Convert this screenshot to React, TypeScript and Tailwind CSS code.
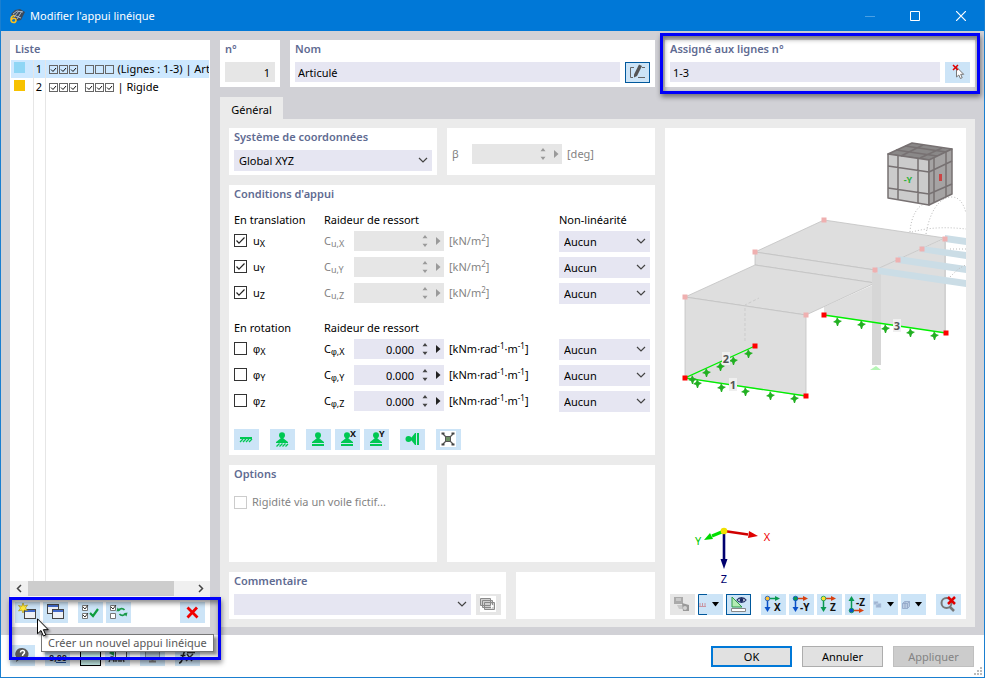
import type { ReactNode } from "react";
import { clsx } from "clsx";

type Cls = { className?: string };

function Card({ title, className, children }: { title?: string; className?: string; children?: ReactNode }) {
  return (
    <section className={clsx("bg-white px-[5px]", className)}>
      {title && <h2 className="h-[22px] pt-px text-[11px] leading-4 font-semibold text-[#5f6b92]">{title}</h2>}
      {children}
    </section>
  );
}

function IconButton({ label, className, disabled, children }: { label: string; className?: string; disabled?: boolean; children: ReactNode }) {
  return (
    <button
      type="button"
      aria-label={label}
      disabled={disabled}
      className={clsx("flex h-[21px] w-[25px] shrink-0 items-center justify-center", disabled ? "bg-[#e6e6e6]" : "bg-[#cce4f7]", className)}
    >
      {children}
    </button>
  );
}

function Icon({ children, w = 25, h = 21 }: { children: ReactNode; w?: number; h?: number }) {
  return (
    <svg width={w} height={h} viewBox={`0 0 ${w} ${h}`} fill="none" aria-hidden="true">
      {children}
    </svg>
  );
}

function Select({ label, value, className }: { label: string; value: string; className?: string }) {
  return (
    <div className={clsx("relative h-[21px] bg-[#e6e6f2]", className)}>
      <select aria-label={label} className="h-full w-full appearance-none bg-transparent pr-5 pl-[5px] text-[11px] leading-4 outline-none">
        <option>{value}</option>
      </select>
      <svg className="pointer-events-none absolute top-[7px] right-1" width="10" height="7" viewBox="0 0 10 7" fill="none" stroke="#444" strokeWidth="1.2">
        <path d="M1 1l4 4 4-4" />
      </svg>
    </div>
  );
}

function Spin({ id, value, disabled }: { id: string; value?: string; disabled?: boolean }) {
  const color = disabled ? "#9a9a9a" : "#444";
  return (
    <div className={clsx("flex h-5 w-[90px] items-center", disabled ? "bg-[#e6e6e6]" : "bg-[#e6e6f2]")}>
      <input id={id} defaultValue={value} disabled={disabled} className="h-full w-[60px] bg-transparent pt-px text-right text-[11px] leading-4 outline-none" />
      <button type="button" aria-label="Incrémenter" disabled={disabled} className="flex w-[22px] justify-center">
        <svg width="6" height="12" viewBox="0 0 6 12" fill={color}>
          <path d="M3 0l2.5 3.3h-5zM3 12L.5 8.7h5z" />
        </svg>
      </button>
      <button type="button" aria-label="Plus" disabled={disabled}>
        <svg width="5" height="8" viewBox="0 0 5 8" fill={disabled ? "#9a9a9a" : "#222"}>
          <path d="M0 0l4.5 4L0 8z" />
        </svg>
      </button>
    </div>
  );
}

function CheckBox({ id, checked, disabled }: { id: string; checked?: boolean; disabled?: boolean }) {
  return (
    <span className="relative block size-[13px] shrink-0">
      <input
        id={id}
        type="checkbox"
        defaultChecked={checked}
        disabled={disabled}
        className={clsx("peer block size-[13px] appearance-none border bg-white", disabled ? "border-[#ccc]" : "border-[#333]")}
      />
      <svg className="pointer-events-none absolute inset-0 hidden peer-checked:block" width="13" height="13" viewBox="0 0 13 13" fill="none" stroke="#222" strokeWidth="1.2">
        <path d="M2.5 6.5l2.5 2.7 5.5-5.7" />
      </svg>
    </span>
  );
}

function Sub({ children }: { children: ReactNode }) {
  return <sub className="bottom-[-2px] text-[9px] leading-none">{children}</sub>;
}

function Sup({ children }: { children: ReactNode }) {
  return <sup className="top-[-4px] text-[8px] leading-none">{children}</sup>;
}

// open-loop phi is only in the Liberation face
function Phi() {
  return <span className="font-['Liberation_Sans',sans-serif]">φ</span>;
}

/* Support glyphs */
const GREEN = "#00c853";

function SupportIcon({ axis, hatch }: { axis?: string; hatch?: boolean }) {
  return (
    <Icon>
      <circle cx="12" cy="6.2" r="3" fill={GREEN} />
      <path d="M10.500 8h3v1.500l4.500 3.500v1H6v-1l4.500-3.500z" fill={GREEN} />
      {hatch ? (
        <path d="M6.500 17.500l3-3M9.500 17.500l3-3M12.500 17.500l3-3M15.500 17.500l2.500-2.500" stroke={GREEN} strokeWidth="1.300" />
      ) : (
        <path d="M6 15h12v2H6z" fill={GREEN} />
      )}
      {axis && (
        <text x="15" y="8" fontSize="9" fontWeight="700" fill="#111">
          {axis}
        </text>
      )}
    </Icon>
  );
}

function WindowShape({ x, y }: { x: number; y: number }) {
  return (
    <g>
      <rect x={x + 0.5} y={y + 0.5} width="11" height="9" fill="#eef1f5" stroke="#444" />
      <path d={`M${x + 1} ${y + 2}h10`} stroke="#4068c8" strokeWidth="2" />
    </g>
  );
}

function NewIcon() {
  return (
    <Icon>
      <WindowShape x={9} y={7} />
      <path d="M8 1l1.200 3 3.300-1-2 3 2 2.500-3.300-.5L8 11 6.800 8l-3.300 1 2-3-2-2.500 3.300.8z" fill="#ffe93b" stroke="#a58a00" strokeWidth=".6" />
    </Icon>
  );
}

function CopyIcon() {
  return (
    <Icon>
      <WindowShape x={4} y={2} />
      <WindowShape x={9} y={7} />
    </Icon>
  );
}

function ChecksIcon({ swap }: { swap?: boolean }) {
  return (
    <Icon>
      <path d="M4.500 3.500h5v5h-5zM4.500 11.500h5v5h-5z" fill="#fff" stroke="#777" />
      <path d="M5 5l2 2 3-4" stroke="#333" />
      {swap ? (
        <>
          <path d="M12 9c2-3 5-3 6.500-1M20 11c-1.500 3-5 3-6.500 1" stroke="#1a9a4a" strokeWidth="1.600" />
          <path d="M10.500 9.500l1-4 3 3zM21.500 10.500l-1 4-3-3z" fill="#1a9a4a" />
        </>
      ) : (
        <>
          <path d="M5 13l2 2 3-4" stroke="#333" />
          <path d="M12 11l3 3 5-7" stroke="#0f9d3f" strokeWidth="2.200" />
        </>
      )}
    </Icon>
  );
}

function AxisViewIcon({ label, a, b, dot, up }: { label: string; a: string; b: string; dot: string; up?: boolean }) {
  const y = up ? 16 : 4;
  return (
    <Icon>
      <path d={up ? "M6.500 16V5" : "M6.500 4v11"} stroke={b} strokeWidth="1.500" />
      <path d={up ? "M6.500 2l3 5h-6z" : "M6.500 18l3-5h-6z"} fill={b} />
      <path d={`M6 ${y}.5h9`} stroke={a} strokeWidth="1.500" />
      <path d={`M14 ${y - 2}l5 2.500-5 2.500z`} fill={a} />
      <circle cx="6.500" cy={y + 0.5} r="2.300" fill={dot} stroke={b} strokeWidth=".8" />
      <text x={label.length > 1 ? 11 : 13} y={up ? 12 : 17} fontSize="10" fontWeight="700" fill="#111">
        {label}
      </text>
    </Icon>
  );
}

function DropIcon({ children }: { children: ReactNode }) {
  return (
    <Icon>
      {children}
      <path d="M14 8h7l-3.500 4.500z" fill="#000" />
    </Icon>
  );
}

function ListChecks({ on }: { on: boolean }) {
  return (
    <svg className="shrink-0" width="30" height="9" viewBox="0 0 30 9" fill="none">
      {[0, 10, 20].map((x) => (
        <g key={x}>
          <rect x={x + 0.5} y=".5" width="8" height="8" stroke="#666" />
          {on && <path d={`M${x + 2} 4.500l2 2 3-3.500`} stroke="#111" />}
        </g>
      ))}
    </svg>
  );
}

const supports = [
  { id: 1, color: "bg-[#8fd6f5]", rotation: false, text: "(Lignes : 1-3) | Articulé" },
  { id: 2, color: "bg-[#f7c200]", rotation: true, text: "| Rigide" },
];

function Highlight({ className }: Cls) {
  return (
    <div
      className={clsx(
        "pointer-events-none absolute border-[3px] border-[#0000fa] shadow-[1px_3px_5px_rgba(0,0,0,0.45),inset_1px_3px_5px_rgba(0,0,0,0.45)]",
        className,
      )}
    />
  );
}

function SupportList() {
  return (
    <aside className="flex w-[200px] shrink-0 flex-col bg-white">
      <h2 className="h-5 px-[5px] pt-px text-[11px] leading-4 font-semibold text-[#5f6b92]">Liste</h2>
      <div className="flex flex-1 overflow-hidden px-px">
        <table className="w-full table-fixed border-collapse">
          <colgroup>
            <col className="w-[22px]" />
            <col className="w-3" />
            <col />
          </colgroup>
          <tbody>
            {supports.map((s) => (
              <tr key={s.id} className={clsx("h-[18px]", s.id === 1 && "bg-[#cde8ff]")}>
                <td className="border-r border-[#e6e6e6] p-0 pl-[3px]">
                  <div className={clsx("mb-1 size-[11px]", s.color)} />
                </td>
                <td className="border-r border-[#e6e6e6] p-0 text-center">{s.id}</td>
                <td className="overflow-hidden p-0 pl-[3px]">
                  <div className="flex items-center leading-4 whitespace-nowrap">
                    <ListChecks on />
                    <span className="w-1.5 shrink-0" />
                    <ListChecks on={s.rotation} />
                    <span className="pl-[3px]">{s.text}</span>
                  </div>
                </td>
              </tr>
            ))}
            <tr>
              <td className="border-r border-[#e6e6e6]" />
              <td className="border-r border-[#e6e6e6]" />
              <td />
            </tr>
          </tbody>
        </table>
      </div>
      <div className="flex h-[15px] items-center bg-[#f0f0f0]">
        <button type="button" aria-label="Défiler à gauche" className="flex w-[18px] justify-center">
          <svg width="6" height="9" viewBox="0 0 6 9" fill="none" stroke="#444" strokeWidth="1.5">
            <path d="M5 1L1.500 4.500 5 8" />
          </svg>
        </button>
        <div className="h-full w-[146px] bg-[#cdcdcd]" />
        <div className="flex-1" />
        <button type="button" aria-label="Défiler à droite" className="flex w-[18px] justify-center">
          <svg width="6" height="9" viewBox="0 0 6 9" fill="none" stroke="#444" strokeWidth="1.5">
            <path d="M1 1l3.500 3.500L1 8" />
          </svg>
        </button>
      </div>
      <div className="relative z-10 flex h-[31px] px-[5px] pt-1.5">
        <IconButton label="Créer un nouvel appui linéique" className="mr-[3px] bg-[#bcd8ec]"><NewIcon /></IconButton>
        <IconButton label="Copier" className="mr-2.5"><CopyIcon /></IconButton>
        <IconButton label="Tout sélectionner" className="mr-[3px]"><ChecksIcon /></IconButton>
        <IconButton label="Inverser la sélection"><ChecksIcon swap /></IconButton>
        <IconButton label="Supprimer" className="ml-auto">
          <Icon><path d="M7.500 5.500l10 10M17 5.500l-9.500 10" stroke="#f00000" strokeWidth="2.800" /></Icon>
        </IconButton>
        <Highlight className="-right-[11px] -bottom-[33px] -left-px top-px" />
        <div role="tooltip" className="absolute top-[38px] left-[31px] border border-[#767676] bg-white px-[6px] text-[11px] leading-4 whitespace-nowrap text-[#575757] shadow-[3px_3px_3px_rgba(0,0,0,0.45)]">
          Créer un nouvel appui linéique
        </div>
        <svg className="absolute top-[22px] left-[27px] drop-shadow-[2px_2px_1px_rgba(0,0,0,0.4)]" width="12" height="19" viewBox="0 0 12 19">
          <path d="M.5.8v15l3.500-3.300 2.400 5.500 2.400-1-2.400-5.300h4.800z" fill="#fff" stroke="#000" />
        </svg>
      </div>
    </aside>
  );
}

const axes = ["X", "Y", "Z"];

function SpringRow({ axis, rotation }: { axis: string; rotation?: boolean }) {
  const sym = rotation ? <Phi /> : "u";
  const id = `${rotation ? "rot" : "trans"}-${axis}`;
  return (
    <div className="grid h-[26px] grid-cols-[90px_30px_95px_1fr_91px] items-start">
      <label htmlFor={id} className="flex h-[19px] items-center gap-1.5">
        <CheckBox id={id} checked={!rotation} />
        <span className="leading-4">{sym}<Sub>{axis}</Sub></span>
      </label>
      <label htmlFor={`c-${id}`} className={clsx("leading-5", !rotation && "text-[#838383]")}>
        C<Sub>{sym},{axis}</Sub>
      </label>
      <Spin id={`c-${id}`} value={rotation ? "0.000" : undefined} disabled={!rotation} />
      {rotation ? (
        <span className="leading-5">[kNm·rad<Sup>-1</Sup>·m<Sup>-1</Sup>]</span>
      ) : (
        <span className="leading-5 text-[#838383]">[kN/m<Sup>2</Sup>]</span>
      )}
      <Select label={`Non-linéarité ${rotation ? "φ" : "u"}${axis}`} value="Aucun" />
    </div>
  );
}

function Conditions() {
  return (
    <Card title="Conditions d'appui" className="h-[270px]">
      <div className="grid h-6 grid-cols-[90px_1fr_91px] pt-[5px] leading-4">
        <span>En translation</span>
        <span>Raideur de ressort</span>
        <span>Non-linéarité</span>
      </div>
      {axes.map((a) => <SpringRow key={a} axis={a} />)}
      <div className="grid h-[30px] grid-cols-[90px_1fr] pt-[11px] leading-4">
        <span>En rotation</span>
        <span>Raideur de ressort</span>
      </div>
      {axes.map((a) => <SpringRow key={a} axis={a} rotation />)}
      <div className="flex gap-[11px] pt-3">
        <IconButton label="Libre">
          <Icon>
            <path d="M6 8h12v2H6z" fill={GREEN} />
            <path d="M6 13l3-3M9 13l3-3M12 13l3-3M15 13l3-3" stroke={GREEN} strokeWidth="1.300" />
          </Icon>
        </IconButton>
        <IconButton label="Encastré"><SupportIcon hatch /></IconButton>
        <div className="flex gap-1">
          <IconButton label="Articulé"><SupportIcon /></IconButton>
          <IconButton label="Glissant X"><SupportIcon axis="X" /></IconButton>
          <IconButton label="Glissant Y"><SupportIcon axis="Y" /></IconButton>
        </div>
        <IconButton label="Latéral">
          <Icon>
            <circle cx="8.500" cy="10" r="3" fill={GREEN} />
            <path d="M10 8.500h1.500l3.500-4.500h1v12h-1l-3.500-4.500H10z" fill={GREEN} />
            <path d="M18 4v12" stroke={GREEN} strokeWidth="2" />
          </Icon>
        </IconButton>
        <IconButton label="Réinitialiser">
          <Icon>
            <path d="M4 2h16v16H4z" fill="#fff" />
            <path d="M7 5l10 10M17 5L7 15" stroke="#555" strokeWidth="1.200" />
            <path d="M9.500 7.500h5v5h-5z" fill="#6d8f63" stroke="#555" />
            <path d="M5.500 3.500h3v2h-3zM15.500 3.500h3v2h-3zM5.500 14.500h3v2h-3zM15.500 14.500h3v2h-3z" fill="#444" />
          </Icon>
        </IconButton>
      </div>
    </Card>
  );
}

const nodePoints = [[824, 315], [946, 333], [685, 378], [755, 346], [806, 396]];
const fadedNodes = [[824, 220], [755, 252], [685, 297], [806, 315], [875, 270], [898, 260], [922, 249], [945, 239]];
const arrowPoints = [
  [837, 321], [861, 324], [885, 328], [910, 332], [934, 335],
  [697, 383], [721, 387], [745, 391], [770, 395], [794, 398],
  [692, 379], [706, 372], [720, 366], [733, 360], [748, 353],
];
const lineLabels = [
  { n: 1, x: 733, y: 385 },
  { n: 2, x: 726, y: 359 },
  { n: 3, x: 897, y: 326 },
];

function ModelView() {
  return (
    <svg viewBox="665 128 301 461" className="min-h-0 w-full flex-1" preserveAspectRatio="xMidYMid slice" role="img" aria-label="Vue du modèle">
      {/* walls and roofs */}
      <g fill="#dedede" stroke="#c2c2c2" strokeWidth=".8">
        <path d="M824 307v8l122 18v-95l-71 32v14z" stroke="none" />
        <path d="M945 238v95" />
        <path d="M824 220l121 18-70 32-120-18z" />
        <path d="M755 252l120 18v13l-120-18z" />
        <path d="M685 297l70-32 120 18-69 32z" />
        <path d="M685 297l121 18v81l-121-18z" />
      </g>
      <path d="M745 341v-36l14-7" stroke="#cbcbcb" strokeDasharray="3 2" fill="none" />
      <path d="M872 273h9v92h-9z" fill="#d6d6d6" />
      <path d="M870 370l6-4 5 4z" fill="#b5f5b5" />
      {/* beams */}
      <g fill="#cbdde6">
        <path d="M945 235l21 3v7l-21-3zM921 246l45 6v7l-45-7zM898 256l68 10v7l-68-10zM876 267l90 13v7l-88-13z" />
      </g>
      <g fill="none" stroke="#bbb" strokeDasharray="1 2">
        <path d="M910 232c1-16 8-27 15-28M926 234c4-24 14-37 26-37 8 0 12 8 14 16M912 232c18-5 36-5 54-3M950 249h16M950 277c6-6 10-10 16-12" />
      </g>
      {fadedNodes.map(([x, y]) => (
        <rect key={`${x}-${y}`} x={x - 2.500} y={y - 2.500} width="5" height="5" fill="#efb0b0" />
      ))}
      {/* supported lines */}
      <path d="M824 315l122 18M755 346l-70 32 121 18" fill="none" stroke="#00f000" strokeWidth="1.300" />
      {arrowPoints.map(([x, y]) => (
        <path key={`${x}-${y}`} d={`M${x} ${y - 4}l2 3 3 1-3 2-1 3h-1l-1-3-3-1 3-2z`} fill="#22b022" />
      ))}
      {nodePoints.map(([x, y]) => (
        <rect key={`${x}-${y}`} x={x - 2.500} y={y - 2.500} width="5" height="5" fill="#f00" />
      ))}
      {lineLabels.map((l) => (
        <g key={l.n}>
          <rect x={l.x - 4} y={l.y - 7} width="8" height="13" fill="#efefef" />
          <text x={l.x} y={l.y + 4} textAnchor="middle" fontSize="11" fontWeight="700" fill="#555">{l.n}</text>
        </g>
      ))}
      {/* navigation cube */}
      <g stroke="#777172" strokeWidth="1.500" strokeLinejoin="round">
        <path d="M888 154l24-11 40 6-22 11z" fill="#8a8888" />
        <path d="M888 154l41 6v45l-41-7z" fill="#cbcbcb" />
        <path d="M929 160l23-11v45l-23 11z" fill="#a5a3a3" />
        <path d="M898 156v44M918 158v45M888 166l41 6 23-11M888 188l41 6 23-10M934 158v44M946 152v45M896 150l41 6M905 146l41 6M901 156l22-11M920 158l22-10" fill="none" />
      </g>
      <text x="908" y="183" textAnchor="middle" fontSize="9" fontWeight="700" fill="#2fb43a">-Y</text>
      <rect x="939" y="174" width="3" height="7" fill="#c44" />
      {/* global axes */}
      <path d="M724 531l24 3.500" stroke="#d00000" strokeWidth="2.600" />
      <path d="M749 531l9 5-10 2z" fill="#e00000" />
      <path d="M724 531l-12 5" stroke="#00e000" strokeWidth="3" />
      <path d="M704 540l6-7 3 6z" fill="#00d800" />
      <path d="M724 531v29" stroke="#00006e" strokeWidth="2.600" />
      <path d="M720.500 559h7L724 569z" fill="#00006e" />
      <circle cx="724" cy="531" r="3.300" fill="#f0e000" />
      <g fontSize="11" textAnchor="middle">
        <text x="767" y="541" fill="#f00000">X</text>
        <text x="698" y="545" fill="#00c800">Y</text>
        <text x="724" y="583" fill="#00006e">Z</text>
      </g>
    </svg>
  );
}

function Preview() {
  return (
    <div className="flex min-w-[301px] flex-1 flex-col bg-white">
      <ModelView />
      <div className="flex h-[30px] shrink-0 gap-2.5 px-[5px] pt-[5px]">
        <div className="flex gap-[3px]">
          <IconButton label="Imprimer" disabled>
            <Icon>
              <path d="M4 3h9v7H4z" fill="#aaa" />
              <path d="M6 4h5v3H6zM7 11h8v4H9z" fill="#c8c8c8" />
              <path d="M12 9l7 2v6h-6z" fill="#999" />
              <circle cx="15" cy="14" r="2" fill="#d2d2d2" />
            </Icon>
          </IconButton>
          <IconButton label="Charges">
            <DropIcon>
              <path d="M9 .5H.5v20H9" stroke="#00589c" />
              <path d="M1 12.500h7M2 12V9M4.500 12V9M7 12V9" stroke="#c9808c" strokeWidth=".8" />
            </DropIcon>
          </IconButton>
          <IconButton label="Afficher" className="border border-[#00589c]">
            <Icon w={23} h={19}>
              <path d="M5 2v10h10z" fill="#b4ecb4" stroke="#2f9a4a" />
              <path d="M4.500 13.500h14v3h-14z" fill="#fff" stroke="#888" />
              <path d="M10 5c2-3 7-3 9 0-2 3-7 3-9 0z" fill="#fff" stroke="#26366a" strokeWidth="1.300" />
              <circle cx="14.500" cy="5" r="2" fill="#1a2a60" />
            </Icon>
          </IconButton>
        </div>
        <div className="flex gap-[3px]">
          <IconButton label="Vue X"><AxisViewIcon label="X" a="#0a9a50" b="#0a50c8" dot="#ffc030" /></IconButton>
          <IconButton label="Vue -Y"><AxisViewIcon label="-Y" a="#d84010" b="#0a50c8" dot="#0a9a50" /></IconButton>
          <IconButton label="Vue Z"><AxisViewIcon label="Z" a="#d84010" b="#0a9a50" dot="#ffe030" /></IconButton>
          <IconButton label="Vue -Z"><AxisViewIcon label="-Z" a="#d84010" b="#0a9a50" dot="#0a50c8" up /></IconButton>
          <IconButton label="Rendu">
            <DropIcon>
              <path d="M1 7.500h4v3H1zM3 9.500h5v4H3z" fill="#9db4d2" stroke="#b9cbe2" strokeWidth=".6" />
            </DropIcon>
          </IconButton>
          <IconButton label="Boîte">
            <DropIcon>
              <path d="M1.500 9.500l2-2h5v5l-2 2h-5zM1.500 9.500h5v5M6.500 9.500l2-2M4 8v6" fill="#b9cbe2" stroke="#8fa5c6" strokeWidth=".8" />
            </DropIcon>
          </IconButton>
        </div>
        <IconButton label="Annuler le zoom">
          <Icon>
            <circle cx="10.500" cy="9" r="5" stroke="#777" strokeWidth="2" />
            <path d="M14 13l4 4" stroke="#777" strokeWidth="2.500" />
            <path d="M12 3l7 7M19 3l-7 7" stroke="#e00000" strokeWidth="2.500" />
          </Icon>
        </IconButton>
      </div>
    </div>
  );
}

function TitleBar() {
  return (
    <header className="flex h-[31px] shrink-0 items-center bg-[#0078d7] pl-2 text-white">
      <svg className="overflow-visible" width="16" height="16" viewBox="0 0 16 16" aria-hidden="true">
        <path d="M2 6l4-4 5-1 5 3-4 8-5 1z" fill="#3c4a5c" />
        <path d="M4 6l4-3 6 1M5 9l5-6M8 11l5-8M4 7l8 3" stroke="#a9b8c8" fill="none" />
        <path d="M5.500 7.500C3 7.500 2 9.500 2 11.500s1 3 2.500 3 2.500-1 2.500-2.300-1-2-2.300-2-2.200 1-2.200 1.800" stroke="#ffc21a" strokeWidth="1.600" fill="none" />
      </svg>
      <h1 className="flex-1 pl-[5px] text-[11px] leading-4">Modifier l'appui linéique</h1>
      <button type="button" aria-label="Réduire" className="flex h-full w-[45px] items-center justify-center text-[#4aa0e4]">
        <svg width="10" height="10" viewBox="0 0 10 10" stroke="currentColor"><path d="M0 5.500h10" /></svg>
      </button>
      <button type="button" aria-label="Agrandir" className="flex h-full w-[45px] items-center justify-center">
        <svg width="10" height="10" viewBox="0 0 10 10" fill="none" stroke="currentColor"><path d="M.5.5h9v9h-9z" /></svg>
      </button>
      <button type="button" aria-label="Fermer" className="flex h-full w-[47px] items-center justify-center">
        <svg width="10" height="10" viewBox="0 0 10 10" stroke="currentColor" strokeWidth="1.2"><path d="M0 0l10 10M10 0L0 10" /></svg>
      </button>
    </header>
  );
}

function Footer() {
  return (
    <footer className="relative flex h-[42px] shrink-0 items-start bg-white pt-2.5 pr-2.5 pl-[9px]">
      <div className="flex gap-2.5">
        <IconButton label="Aide">
          <Icon>
            <path d="M12.500 3a6.500 6 0 1 1-3 11.500L6 17l1-4A6.500 6 0 0 1 12.500 3z" fill="#5a5a5a" />
            <path d="M10.500 7.500c0-3 4.500-2.500 4 0-.3 1.500-2 1.500-2 3.500M12.500 12v1.500" stroke="#fff" strokeWidth="1.500" />
          </Icon>
        </IconButton>
        <IconButton label="Unités">
          <Icon>
            <text x="4" y="16" fontSize="9" fontWeight="700" fill="#223">0,00</text>
            <path d="M11 17.500h10" stroke="#2050a0" />
          </Icon>
        </IconButton>
        <button type="button" aria-label="Couleur" className="h-[21px] w-[21px] border border-black bg-[#c9f2ee]" />
        <div className="-ml-1.5 flex gap-2.5">
          <IconButton label="Modèle">
            <Icon>
              <path d="M4 8l5-4v7z" fill="#1a9a4a" />
              <WindowShape x={10} y={3} />
              <path d="M4 17l2-5h2l1 5M11 17v-4h3v4M16 17v-4h2l1 4M6 14.500h12" stroke="#333" strokeWidth="1.300" />
            </Icon>
          </IconButton>
          <IconButton label="Affichage">
            <Icon>
              <path d="M5.500 3.500h14v9h-14z" fill="#b5c9d6" stroke="#7a8894" />
              <path d="M12.500 13v3M9 16.500h7" stroke="#888" strokeWidth="2" />
            </Icon>
          </IconButton>
          <IconButton label="Formule">
            <Icon>
              <path d="M4 18c3 0 3-3 4-7s2-7 4-6M5.500 10.500h5" stroke="#222" strokeWidth="1.500" />
              <path d="M12 9l5 7M18 9l-7 7M12 7.500h8" stroke="#333" strokeWidth="1.500" />
            </Icon>
          </IconButton>
        </div>
      </div>
      <div className="ml-auto flex gap-2.5 pt-px">
        <button type="button" className="h-[21px] w-[81px] border-2 border-[#0078d7] bg-[#e1e1e1] leading-4">OK</button>
        <button type="button" className="h-[21px] w-[81px] border border-[#adadad] bg-[#e1e1e1] leading-4">Annuler</button>
        <button type="button" disabled className="h-[21px] w-[81px] border border-[#bfbfbf] bg-[#ccc] leading-4 text-[#838383]">Appliquer</button>
      </div>
      <svg className="absolute right-0.5 bottom-0.5" width="8" height="8" viewBox="0 0 8 8" fill="#bbb" aria-hidden="true">
        <path d="M6 0h2v2H6zM3 3h2v2H3zM6 3h2v2H6zM0 6h2v2H0zM3 6h2v2H3zM6 6h2v2H6z" />
      </svg>
    </footer>
  );
}

export default function App() {
  return (
    <div className="flex min-h-screen flex-col border border-t-0 border-[#1a7fd0] font-['Noto_Sans','Open_Sans',sans-serif] text-[11px] text-black">
      <TitleBar />
      <main className="flex flex-1 gap-2.5 bg-[#d1d1d6] px-[9px] pt-[9px] pb-2">
        <SupportList />
        <div className="flex min-w-0 flex-1 flex-col">
          <div className="flex gap-2.5 pb-2.5">
            <Card title="n°" className="h-[47px] w-[60px]">
              <input aria-label="n°" defaultValue="1" readOnly className="h-5 w-full bg-[#e6e6e6] px-[5px] pt-px text-right leading-4 outline-none" />
            </Card>
            <Card title="Nom" className="h-[47px] w-[365px]">
              <div className="flex gap-[5px]">
                <input aria-label="Nom" defaultValue="Articulé" className="h-5 min-w-0 flex-1 bg-[#e6e6f2] px-[3px] pt-px leading-4 outline-none" />
                <IconButton label="Modifier le nom" className="border border-[#00589c]">
                  <Icon w={23} h={19}>
                    <path d="M8 4.500H4.500v10H7M12 14.500h7M16 4.500h3" stroke="#666" />
                    <path d="M13 1.500l3 1.500-5 10-3 1.500v-3z" fill="#555" />
                  </Icon>
                </IconButton>
              </div>
            </Card>
            <Card title="Assigné aux lignes n°" className="relative h-[47px] flex-1">
              <div className="flex gap-[5px]">
                <input aria-label="Assigné aux lignes n°" defaultValue="1-3" className="h-5 min-w-0 flex-1 bg-[#e6e6f2] px-[3px] pt-px leading-4 outline-none" />
                <IconButton label="Sélectionner les lignes">
                  <Icon>
                    <path d="M11.500 5v10l2.300-2 1.600 3.500 1.800-.8-1.500-3.400h3z" fill="#fff" stroke="#777" />
                    <path d="M8 3l5 5M13 3L8 8" stroke="#e00000" strokeWidth="1.500" />
                  </Icon>
                </IconButton>
              </div>
              <Highlight className="-inset-x-[5px] -inset-y-[7px]" />
            </Card>
          </div>

          <div role="tablist" className="flex">
            <button type="button" role="tab" aria-selected="true" className="h-[22px] w-[63px] bg-[#ebebeb] pt-1 leading-4">Général</button>
          </div>
          <div className="flex flex-1 gap-2.5 bg-[#ebebeb] px-[9px] pt-[9px] pb-2">
            <div className="flex w-[426px] shrink-0 flex-col gap-2.5">
              <div className="grid h-[47px] grid-cols-2 gap-2.5">
                <Card title="Système de coordonnées">
                  <Select label="Système de coordonnées" value="Global XYZ" />
                </Card>
                <Card className="flex items-center gap-[5px] pt-[5px] text-[#838383]">
                  <label htmlFor="beta" className="w-[15px] leading-4">β</label>
                  <Spin id="beta" disabled />
                  <span>[deg]</span>
                </Card>
              </div>
              <Conditions />
              <div className="grid flex-1 grid-cols-2 gap-2.5">
                <Card title="Options">
                  <label htmlFor="wall" className="flex items-center gap-[5px] pt-[7px] leading-4 text-[#838383]">
                    <CheckBox id="wall" disabled />
                    Rigidité via un voile fictif...
                  </label>
                </Card>
                <Card />
              </div>
              <div className="flex h-[47px] gap-2.5">
                <Card title="Commentaire" className="w-[277px]">
                  <div className="flex gap-[5px]">
                    <Select label="Commentaire" value="" className="flex-1" />
                    <IconButton label="Bibliothèque de commentaires" disabled>
                      <Icon>
                        <path d="M4 2h16v16H4z" fill="#fff" />
                        <path d="M4.500 4.500h10v7h-10zM6.500 6.500h10v7h-10zM8.500 8.500h10v7h-10z" fill="#d0d0d0" stroke="#8a8a8a" />
                        <path d="M15 10l3 2-3 3z" fill="#fff" />
                      </Icon>
                    </IconButton>
                  </div>
                </Card>
                <Card className="flex-1" />
              </div>
            </div>
            <Preview />
          </div>
        </div>
      </main>
      <Footer />
    </div>
  );
}
